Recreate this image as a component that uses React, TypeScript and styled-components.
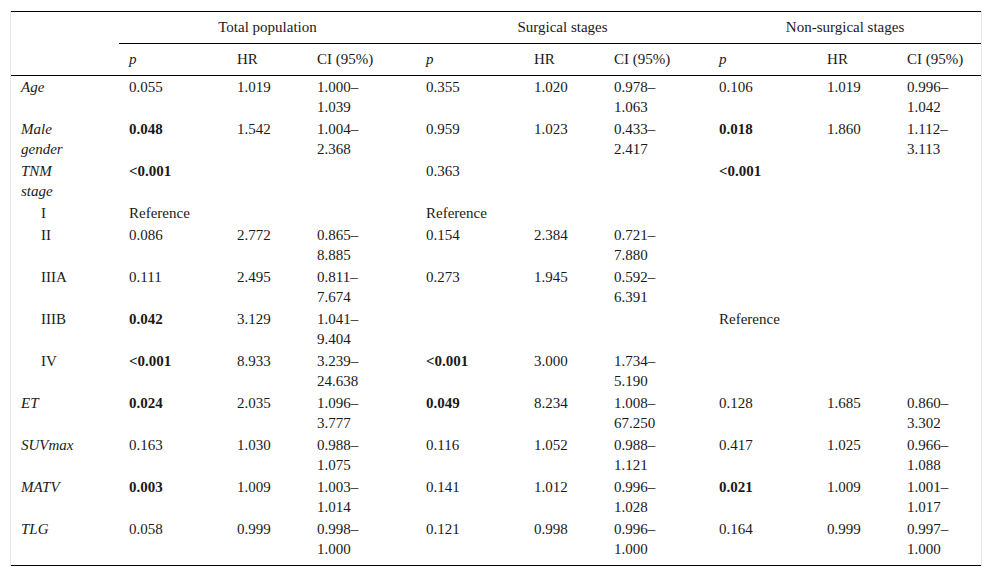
import styled, { createGlobalStyle } from 'styled-components';

type Cell = string;

interface IRow {
    label: string;
    sub?: boolean;
    cells: Cell[];
}

const GlobalStyle = createGlobalStyle`
    html, body {
        margin: 0;
        background: #ffffff;
    }
`;

const Frame = styled.div`
    width: 970px;
    margin: 11px 0 0 10px;
    border-left: 1px solid #e6e6e6;
    border-right: 1px solid #e6e6e6;
    font-family: "Liberation Serif", "Times New Roman", serif;
    font-size: 15px;
    line-height: 20px;
    color: #1a1a1a;
`;

const Table = styled.table`
    width: 970px;
    table-layout: fixed;
    border-collapse: collapse;
    border-top: 1px solid #000;
    border-bottom: 1px solid #000;
`;

const GroupHead = styled.th`
    font-weight: normal;
    text-align: center;
    padding: 5px 10px 6px;
    border-bottom: 1px solid #000;
`;

const SubHead = styled.th<{ $italic?: boolean }>`
    font-weight: normal;
    font-style: ${p => (p.$italic ? 'italic' : 'normal')};
    text-align: left;
    padding: 5px 10px 6px;
    border-bottom: 1px solid #000;
`;

const BlankHead = styled.th`
    padding: 0;
`;

const Label = styled.td<{ $sub?: boolean; $last?: boolean }>`
    vertical-align: top;
    text-align: left;
    font-style: ${p => (p.$sub ? 'normal' : 'italic')};
    padding: 1px 36px ${p => (p.$last ? '6px' : '1px')} ${p => (p.$sub ? '30px' : '10px')};
`;

// CI cells get a wide right padding so the range breaks after the dash
const Value = styled.td<{ $bold?: boolean; $last?: boolean; $range?: boolean }>`
    vertical-align: top;
    text-align: left;
    font-weight: ${p => (p.$bold ? 'bold' : 'normal')};
    padding: 1px ${p => (p.$range ? '30px' : '10px')} ${p => (p.$last ? '6px' : '1px')} 10px;
`;

const widths = [108, 108, 80, 109, 108, 80, 105, 108, 80, 84];

const rows: IRow[] = [
    { label: 'Age', cells: ['0.055', '1.019', '1.000–1.039', '0.355', '1.020', '0.978–1.063', '0.106', '1.019', '0.996–1.042'] },
    { label: 'Male gender', cells: ['*0.048', '1.542', '1.004–2.368', '0.959', '1.023', '0.433–2.417', '*0.018', '1.860', '1.112–3.113'] },
    { label: 'TNM stage', cells: ['*<0.001', '', '', '0.363', '', '', '*<0.001', '', ''] },
    { label: 'I', sub: true, cells: ['Reference', '', '', 'Reference', '', '', '', '', ''] },
    { label: 'II', sub: true, cells: ['0.086', '2.772', '0.865–8.885', '0.154', '2.384', '0.721–7.880', '', '', ''] },
    { label: 'IIIA', sub: true, cells: ['0.111', '2.495', '0.811–7.674', '0.273', '1.945', '0.592–6.391', '', '', ''] },
    { label: 'IIIB', sub: true, cells: ['*0.042', '3.129', '1.041–9.404', '', '', '', 'Reference', '', ''] },
    { label: 'IV', sub: true, cells: ['*<0.001', '8.933', '3.239–24.638', '*<0.001', '3.000', '1.734–5.190', '', '', ''] },
    { label: 'ET', cells: ['*0.024', '2.035', '1.096–3.777', '*0.049', '8.234', '1.008–67.250', '0.128', '1.685', '0.860–3.302'] },
    { label: 'SUVmax', cells: ['0.163', '1.030', '0.988–1.075', '0.116', '1.052', '0.988–1.121', '0.417', '1.025', '0.966–1.088'] },
    { label: 'MATV', cells: ['*0.003', '1.009', '1.003–1.014', '0.141', '1.012', '0.996–1.028', '*0.021', '1.009', '1.001–1.017'] },
    { label: 'TLG', cells: ['0.058', '0.999', '0.998–1.000', '0.121', '0.998', '0.996–1.000', '0.164', '0.999', '0.997–1.000'] },
];

const groups = ['Total population', 'Surgical stages', 'Non-surgical stages'];

const App = () => {
    return (
        <Frame>
            <GlobalStyle />
            <Table>
                <colgroup>
                    {widths.map((w, i) => <col key={i} style={{ width: w }} />)}
                </colgroup>
                <thead>
                    <tr>
                        <BlankHead />
                        {groups.map(g => <GroupHead key={g} colSpan={3}>{g}</GroupHead>)}
                    </tr>
                    <tr>
                        <SubHead />
                        {groups.map(g => [
                            <SubHead key={g + 'p'} $italic>p</SubHead>,
                            <SubHead key={g + 'hr'}>HR</SubHead>,
                            <SubHead key={g + 'ci'}>CI (95%)</SubHead>,
                        ])}
                    </tr>
                </thead>
                <tbody>
                    {rows.map((row, ri) => {
                        const last = ri === rows.length - 1;
                        return (
                            <tr key={row.label}>
                                <Label $sub={row.sub} $last={last}>{row.label}</Label>
                                {row.cells.map((c, ci) => {
                                    const bold = c.startsWith('*');
                                    return (
                                        <Value key={ci} $bold={bold} $last={last} $range={ci % 3 === 2}>
                                            {bold ? c.slice(1) : c}
                                        </Value>
                                    );
                                })}
                            </tr>
                        );
                    })}
                </tbody>
            </Table>
        </Frame>
    );
};

export default App;
